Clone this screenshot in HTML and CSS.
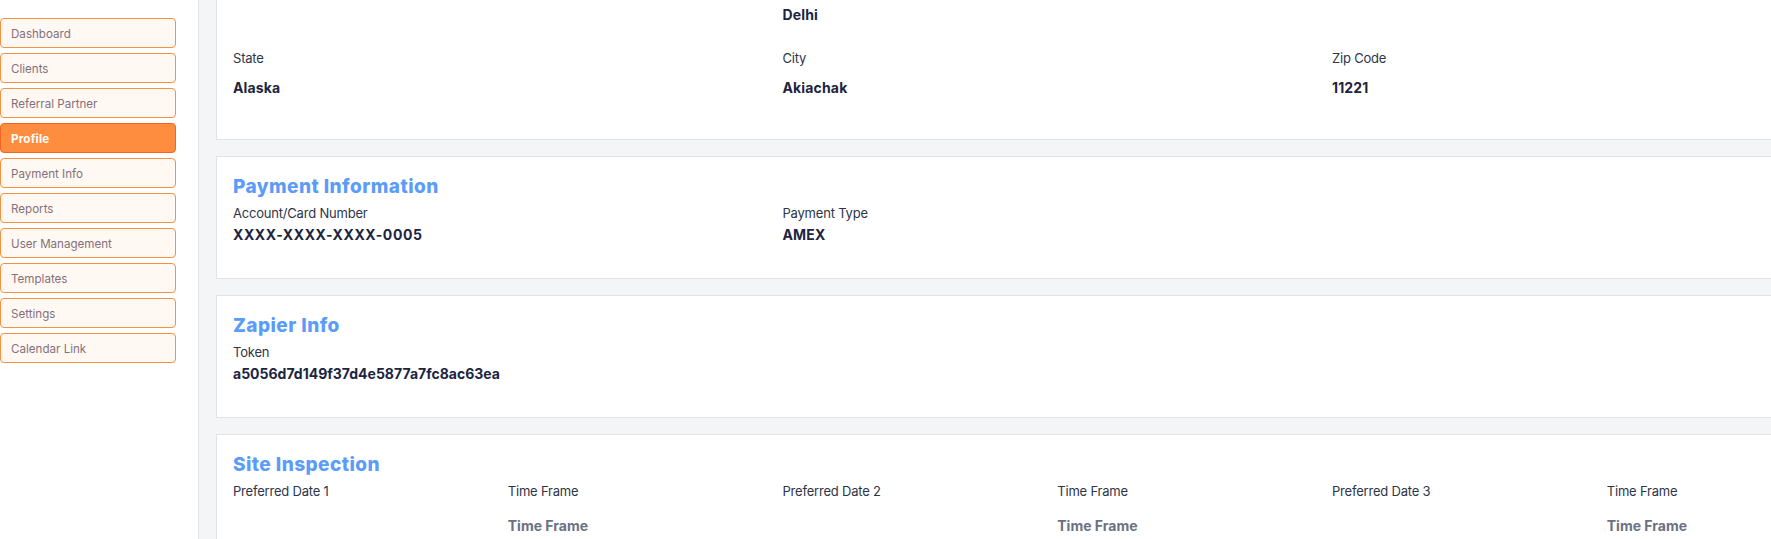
FILE: index.html
```html
<!DOCTYPE html>
<html lang="en">
<head>
<meta charset="utf-8">
<title>Profile</title>
<link rel="stylesheet" href="styles.css">
</head>
<body>
<div class="layout">
  <aside class="sidebar">
    <nav class="menu">
      <a class="menu-item">Dashboard</a>
      <a class="menu-item">Clients</a>
      <a class="menu-item">Referral Partner</a>
      <a class="menu-item active">Profile</a>
      <a class="menu-item">Payment Info</a>
      <a class="menu-item">Reports</a>
      <a class="menu-item">User Management</a>
      <a class="menu-item">Templates</a>
      <a class="menu-item">Settings</a>
      <a class="menu-item">Calendar Link</a>
    </nav>
  </aside>
  <main class="main">
    <section class="card card-address">
      <div class="grid grid-3 first-row">
        <div class="field"></div>
        <div class="field"><div class="value">Delhi</div></div>
        <div class="field"></div>
      </div>
      <div class="grid grid-3">
        <div class="field"><div class="label">State</div><div class="value">Alaska</div></div>
        <div class="field"><div class="label">City</div><div class="value">Akiachak</div></div>
        <div class="field"><div class="label">Zip Code</div><div class="value">11221</div></div>
      </div>
    </section>

    <section class="card">
      <h2 class="card-title">Payment Information</h2>
      <div class="grid grid-3">
        <div class="field"><div class="label">Account/Card Number</div><div class="value value-wide">XXXX-XXXX-XXXX-0005</div></div>
        <div class="field"><div class="label">Payment Type</div><div class="value">AMEX</div></div>
      </div>
    </section>

    <section class="card">
      <h2 class="card-title">Zapier Info</h2>
      <div class="grid grid-3">
        <div class="field"><div class="label">Token</div><div class="value value-tight">a5056d7d149f37d4e5877a7fc8ac63ea</div></div>
      </div>
    </section>

    <section class="card">
      <h2 class="card-title">Site Inspection</h2>
      <div class="grid grid-6">
        <div class="field"><div class="label">Preferred Date 1</div></div>
        <div class="field"><div class="label">Time Frame</div><div class="value muted">Time Frame</div></div>
        <div class="field"><div class="label">Preferred Date 2</div></div>
        <div class="field"><div class="label">Time Frame</div><div class="value muted">Time Frame</div></div>
        <div class="field"><div class="label">Preferred Date 3</div></div>
        <div class="field"><div class="label">Time Frame</div><div class="value muted">Time Frame</div></div>
      </div>
    </section>
  </main>
</div>
</body>
</html>
```

FILE: styles.css
```css
html, body {
  margin: 0;
  padding: 0;
  height: 100%;
  overflow: hidden;
}

body {
  font-family: Inter, "Open Sans", sans-serif;
  background: #f4f5f7;
  color: #2e3547;
}

.layout {
  display: flex;
  height: 100vh;
}

.sidebar {
  flex: none;
  width: 199px;
  box-sizing: border-box;
  background: #ffffff;
  border-right: 1px solid #e4e4e6;
}

.menu {
  display: flex;
  flex-direction: column;
  gap: 5px;
  width: 176px;
  padding-top: 18px;
}

.menu-item {
  display: flex;
  align-items: center;
  height: 30px;
  box-sizing: border-box;
  padding: 2px 0 0 10px;
  border: 1px solid #f8913f;
  border-radius: 4px;
  background: #fff8f3;
  color: #85707a;
  font-size: 11.6px;
  letter-spacing: 0;
  text-decoration: none;
}

.menu-item.active {
  background: #ff8d40;
  border-color: #f26822;
  color: #ffffff;
  font-weight: 700;
  letter-spacing: 0.2px;
}

.main {
  flex: 1;
  min-width: 0;
  overflow: hidden;
  padding-left: 17px;
  display: flex;
  flex-direction: column;
  gap: 16px;
}

.card {
  flex: none;
  width: 1682px;
  box-sizing: border-box;
  background: #ffffff;
  border: 1px solid #e3e3e5;
  padding: 19px 16px 33px;
}

.card-address {
  border-top: none;
  padding-top: 5px;
  padding-bottom: 41px;
}

.card-title {
  margin: 0 0 5px;
  font-size: 19px;
  line-height: 22px;
  font-weight: 800;
  color: #5b9cf9;
  letter-spacing: 0.45px;
}

.grid {
  display: grid;
}

.grid-3 {
  grid-template-columns: repeat(3, 549.5px);
}

.grid-6 {
  grid-template-columns: repeat(6, 274.75px);
}

.first-row {
  margin-bottom: 23px;
}

.label {
  font-size: 13px;
  line-height: 20px;
  color: #2e3547;
  letter-spacing: -0.2px;
}

.value {
  margin-top: 2px;
  font-size: 14px;
  line-height: 20px;
  font-weight: 700;
  color: #1c2540;
  letter-spacing: 0.15px;
}

.value-wide {
  letter-spacing: 0.6px;
}

.value-tight {
  letter-spacing: 0;
}

.card-address .value {
  margin-top: 10px;
}

.card-address .first-row .value {
  margin-top: 0;
}

.value.muted {
  margin-top: 15px;
  color: #6b7183;
  letter-spacing: 0;
}
```
